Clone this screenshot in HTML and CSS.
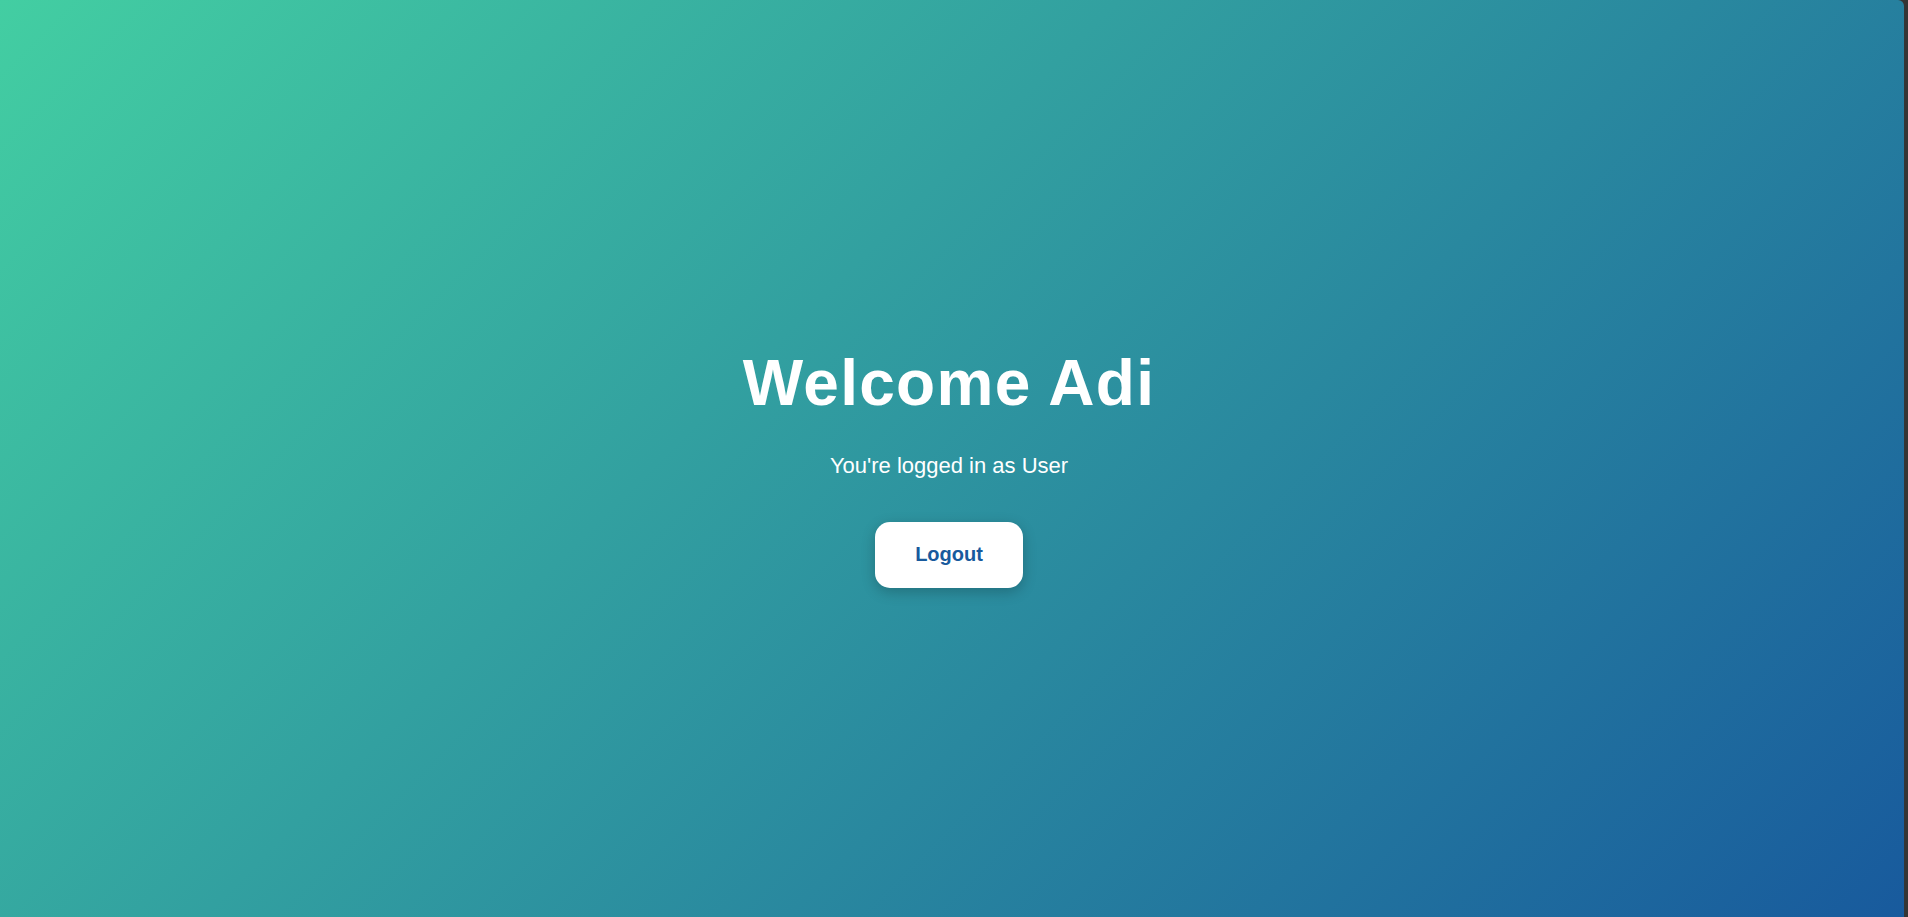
FILE: index.html
```html
<!DOCTYPE html>
<html lang="en">
<head>
<meta charset="utf-8">
<title>Welcome</title>
<link rel="stylesheet" href="styles.css">
</head>
<body>
<div class="frame">
  <main class="welcome">
    <h1 class="welcome-title">Welcome Adi</h1>
    <p class="welcome-sub">You're logged in as User</p>
    <button class="logout-btn" type="button">Logout</button>
  </main>
</div>
</body>
</html>
```

FILE: styles.css
```css
html, body {
  margin: 0;
  padding: 0;
  height: 100%;
}

body {
  background: #353535;
  font-family: "Liberation Sans", Arial, sans-serif;
  overflow: hidden;
}

.frame {
  width: calc(100% - 4px);
  height: 100vh;
  background: linear-gradient(135deg, #43cea2 0%, #185a9d 100%);
  border-top-right-radius: 6px;
}

.welcome {
  box-sizing: border-box;
  height: 100%;
  padding: 16px 6px 0 0;
  display: flex;
  flex-direction: column;
  align-items: center;
  justify-content: center;
  color: #ffffff;
  text-align: center;
}

.welcome-title {
  margin: 0 0 33px;
  font-size: 64px;
  font-weight: 700;
  line-height: normal;
  letter-spacing: 1.3px;
}

.welcome-sub {
  margin: 0 0 43px;
  font-size: 22px;
  line-height: normal;
}

.logout-btn {
  font-family: "Liberation Sans", Arial, sans-serif;
  font-size: 20px;
  font-weight: 700;
  line-height: 23px;
  color: #185a9d;
  background: #ffffff;
  border: none;
  border-radius: 15px;
  padding: 21.5px 40px;
  box-shadow: 0 4px 14px rgba(0, 0, 0, 0.22);
  cursor: pointer;
}
```
